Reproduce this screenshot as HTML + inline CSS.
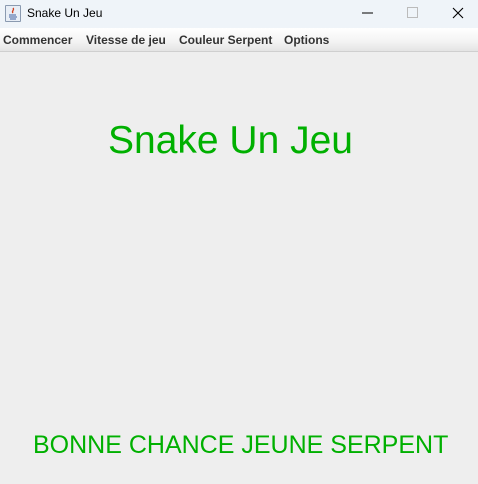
<!DOCTYPE html>
<html><head><meta charset="utf-8"><style>
html,body{margin:0;padding:0;width:478px;height:484px;overflow:hidden;background:#eeeeee;font-family:"Liberation Sans",Arial,sans-serif;}
.title{position:absolute;left:0;top:0;width:478px;height:28px;background:#eff4f9;}
.title .t{position:absolute;left:27px;top:6px;font-size:12px;color:#000;}
.icon{position:absolute;left:5px;top:5px;width:14px;height:15px;border:1px solid #8a9ab0;background:#e8eef6;border-radius:1px;}
.menu{position:absolute;left:0;top:28px;width:478px;height:23px;background:linear-gradient(#ffffff,#f3f3f3 60%,#e4e4e4);border-bottom:1px solid #cfcfcf;}
.menu span{position:absolute;top:5px;font-size:12px;font-weight:bold;color:#333;}
.g{position:absolute;color:#00b000;white-space:nowrap;}
</style></head><body>
<div class="title">
<div class="icon"><svg width="14" height="15" viewBox="0 0 14 15"><path d="M7 2c2 2-2 3 0 5" stroke="#d04020" fill="none" stroke-width="1.3"/><path d="M3 9h7M3 11h8M4 13h6" stroke="#4060a0" stroke-width="1"/></svg></div>
<div class="t">Snake Un Jeu</div>
<svg style="position:absolute;left:360px;top:5px" width="110" height="16">
<line x1="2" y1="8" x2="13" y2="8" stroke="#000" stroke-width="1"/>
<rect x="47.5" y="2.5" width="10" height="10" fill="none" stroke="#bbb"/>
<path d="M93 3l10 10M103 3l-10 10" stroke="#000" stroke-width="1.1"/>
</svg>
</div>
<div class="menu">
<span style="left:3px">Commencer</span>
<span style="left:86px">Vitesse de jeu</span>
<span style="left:179px">Couleur Serpent</span>
<span style="left:284px">Options</span>
</div>
<div class="g" style="left:108px;top:118px;font-size:39px;line-height:46px;">Snake Un Jeu</div>
<div class="g" style="left:33px;top:431px;font-size:25px;line-height:29px;">BONNE CHANCE JEUNE SERPENT</div>
</body></html>
